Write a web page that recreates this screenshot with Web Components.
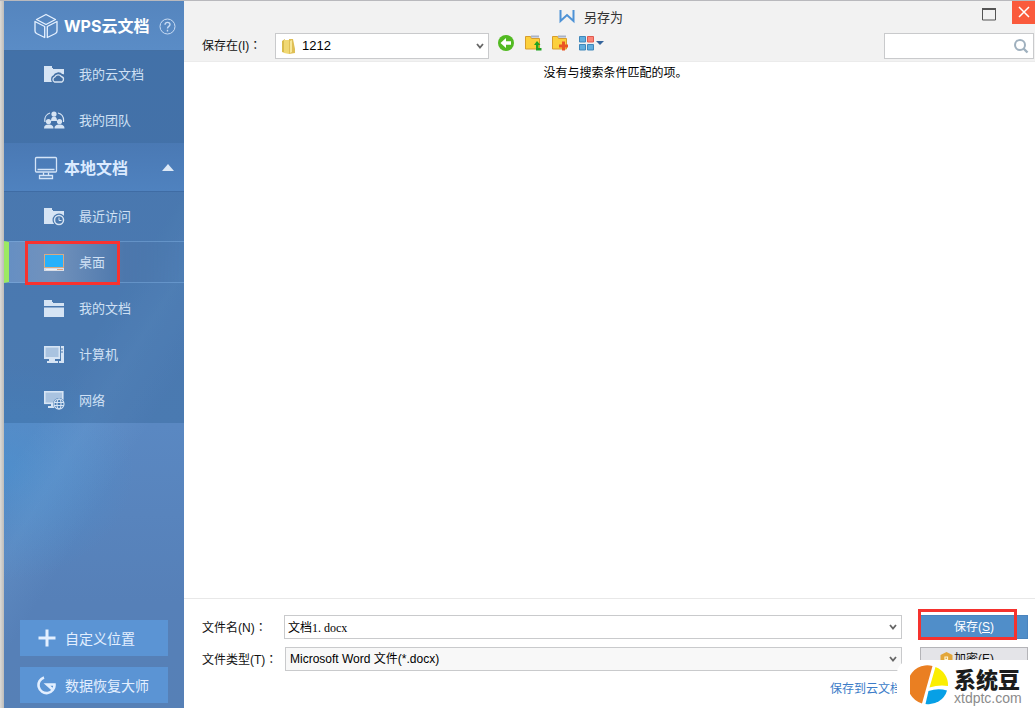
<!DOCTYPE html>
<html lang="zh-CN">
<head>
<meta charset="utf-8">
<title>另存为</title>
<style>
  body { margin: 0; font-family: "Liberation Sans", "Noto Sans CJK SC", sans-serif; font-size: 12px; color: #111; }
</style>
</head>
<body>
<save-dialog></save-dialog>

<template id="t-save-dialog">
  <style>
    :host { display: flex; position: relative; box-sizing: border-box; min-height: 100vh; padding-left: 4px; background: linear-gradient(90deg, #dcdad6, #bdbcba) left / 4px 100% no-repeat #fff; }
    :host::before { content: ""; position: absolute; top: 0; left: 0; right: 0; height: 1px; background: #b9b9bd; z-index: 1; }
    main { flex: 1; min-width: 0; display: flex; flex-direction: column; background: #fff; }
    .list { flex: 1; margin: 0; padding: 2px 0 0 12px; text-align: center; line-height: 18px; color: #000; }
    brand-mark { position: absolute; right: 0; bottom: 0; }
  </style>
  <side-bar></side-bar>
  <main>
    <dialog-header></dialog-header>
    <p class="list">没有与搜索条件匹配的项。</p>
    <dialog-footer></dialog-footer>
  </main>
  <brand-mark></brand-mark>
</template>

<template id="t-side-bar">
  <style>
    :host { display: flex; flex-direction: column; flex: none; width: 180px;
      background:
        linear-gradient(122deg, transparent 48%, rgba(120,170,220,.2) 56%, transparent 66%),
        radial-gradient(ellipse 130px 110px at 0 470px, rgba(70,150,215,.5), transparent),
        linear-gradient(#5784bd, #5a88c2 60%, #5680b8 85%, #5680b6); }
    nav { display: block; }
    .foot { margin-top: auto; display: flex; flex-direction: column; gap: 11px; padding: 0 16px 5px; }
  </style>
  <nav>
    <nav-section heading="WPS云文档" kind="cloud">
      <svg slot="icon" width="24" height="26" viewBox="0 0 24 26" fill="none" stroke="#e6f1ff" stroke-width="1.3" stroke-linejoin="round"><path d="M12 1.500 21.500 6.500 12 11.500 2.500 6.500ZM1 8.500 10.700 13.500V24.500L2.500 20.500Q1 19.500 1 18ZM23 8.500 13.300 13.500V24.500L21.500 20.500Q23 19.500 23 18Z"/></svg>
      <nav-item label="我的云文档"><svg slot="icon" width="21" height="20" viewBox="0 0 21 20"><path d="M0 2h8v2h12v14H0z" fill="#d6e4f4"/><path d="M9 4.500h11" stroke="#4470a4"/><path d="M10.500 18a3 3 0 0 1 0-5.600 4 4 0 0 1 7-.8 3 3 0 0 1 2 5.800z" fill="#d6e4f4" stroke="#4470a4" stroke-width="3"/><path d="M10.500 18a2.700 2.700 0 0 1 .3-5 3.800 3.800 0 0 1 6.500-.5 3 3 0 0 1 .7 5.500z" fill="#4470a4" stroke="#d6e4f4" stroke-width="1.300"/></svg></nav-item>
      <nav-item label="我的团队"><svg slot="icon" width="21" height="20" viewBox="0 0 21 20" fill="#d6e4f4"><circle cx="10" cy="4" r="2.600"/><path d="M7 11c0-3 1-4.500 3-4.500s3 1.500 3 4.500z"/><circle cx="4.500" cy="11.500" r="2.600"/><circle cx="15.500" cy="11.500" r="2.600"/><path d="M0 18.500c0-3 1.500-4 4.500-4s5 1 5 4zM10.500 18.500c0-3 2-4 5-4s5 1 5 4z"/><path d="M1 12C0 7 3 4 6 3M14 3c4 1 6 4 5.500 9" fill="none" stroke="#d6e4f4" stroke-width="1.200"/></svg></nav-item>
    </nav-section>
    <nav-section heading="本地文档" kind="local">
      <svg slot="icon" width="24" height="24" viewBox="0 0 24 24" fill="none" stroke="#d5e5f8" stroke-width="1.300"><rect x="1.500" y="1.500" width="21" height="14.500" rx="1"/><path d="M3.500 13.500h17M9.500 16.500v3M14.500 16.500v3M5.500 22.500v-3h13v3z"/></svg>
      <nav-item label="最近访问"><svg slot="icon" width="21" height="20" viewBox="0 0 21 20"><path d="M0 2h8v2h12v14H0z" fill="#d6e4f4"/><path d="M9 4.500h11" stroke="#4a78ae"/><circle cx="15" cy="14" r="6.500" fill="#4a78ae"/><circle cx="15" cy="14" r="4.500" fill="none" stroke="#d6e4f4" stroke-width="1.500"/><path d="M15 11.500V14.500h2.500" fill="none" stroke="#d6e4f4"/></svg></nav-item>
      <nav-item label="桌面" selected><svg slot="icon" width="21" height="20" viewBox="0 0 21 20"><rect x="0" y="2" width="20" height="17" fill="#d9dde6"/><rect x=".5" y="2.500" width="19" height="13" fill="#27b1fb" stroke="#d9a982"/><path d="M2 17.500h11" stroke="#eef0f5"/><path d="M13 17.500h6" stroke="#e0a37a"/></svg></nav-item>
      <nav-item label="我的文档"><svg slot="icon" width="21" height="20" viewBox="0 0 21 20" fill="#d6e4f4"><path d="M0 2h8v2h12v4H0zM0 9.500h20V19H0z"/><path d="M9 4.500h11" stroke="#4a78ae"/></svg></nav-item>
      <nav-item label="计算机"><svg slot="icon" width="21" height="20" viewBox="0 0 21 20"><rect x=".8" y="2.800" width="14.500" height="11" fill="#a9c3e0" stroke="#d6e4f4" stroke-width="1.600"/><path d="M5 14h6v3h3v2H3v-2h2zM17 2h3v17h-5v-2h2zM0 13h16v2H0z" fill="#d6e4f4"/><path d="M17 5h2M17 8h2" stroke="#4a78ae"/></svg></nav-item>
      <nav-item label="网络"><svg slot="icon" width="21" height="20" viewBox="0 0 21 20"><rect x=".8" y="1.800" width="18" height="11.500" fill="#a9c3e0" stroke="#d6e4f4" stroke-width="1.600"/><path d="M7 14h5v4H4v-2h3z" fill="#d6e4f4"/><circle cx="15" cy="14" r="6" fill="#4a7db4"/><g fill="none" stroke="#d6e4f4" stroke-width="1.100"><circle cx="15" cy="14" r="5"/><ellipse cx="15" cy="14" rx="2" ry="5"/><path d="M10 12.500h10M10 15.500h10"/></g></svg></nav-item>
    </nav-section>
  </nav>
  <div class="foot">
    <side-button label="自定义位置"><svg slot="icon" width="20" height="20" viewBox="0 0 20 20"><path d="M10 1.500v17M1.500 10h17" stroke="#e3efff" stroke-width="3"/></svg></side-button>
    <side-button label="数据恢复大师"><svg slot="icon" width="20" height="20" viewBox="0 0 20 20"><path d="M7 2.500A8 8 0 1 0 17.500 9.500H10L15 14" fill="none" stroke="#e3efff" stroke-width="2.600"/></svg></side-button>
  </div>
</template>

<template id="t-nav-section">
  <style>
    :host { display: block; }
    header { display: flex; align-items: center; box-sizing: border-box; height: 51px; padding: 2px 8px 0 30px; background: linear-gradient(#5585be, #5a8cc6); border-bottom: 1px solid #4470a4; }
    :host([kind="local"]) header { height: 49px; background: linear-gradient(#4a79b4, #4f82bf); border-bottom-color: #3f6ca4; }
    button { border: 0; padding: 0; background: none; color: inherit; font: inherit; display: flex; align-items: center; }
    .title { flex: 1; gap: 6px; font: bold 16px/24px Inter, "Noto Sans CJK SC", sans-serif; color: #fff; white-space: nowrap; }
    :host([kind="local"]) .title { color: #dcebff; }
    .help, :host([kind="local"]) .fold { display: flex; }
    .fold, :host([kind="local"]) .help { display: none; }
    .items { padding-top: 1px; background: rgba(40,90,140,.3); }
    :host([kind="cloud"]) .items { padding: 0; background: rgba(20,70,120,.3); }
  </style>
  <header>
    <button class="title" type="button"><slot name="icon"></slot><span></span></button>
    <button class="help" type="button" aria-label="帮助"><svg width="17" height="17" viewBox="0 0 17 17" fill="none" stroke="#c9dcf4"><circle cx="8.500" cy="8.500" r="7.500"/><path d="M6 6.800C6 3.500 11 3.700 11 6.600 11 8.500 8.500 8.300 8.500 10.500M8.500 11.800v1.600" stroke-width="1.400"/></svg></button>
    <button class="fold" type="button" aria-label="收起"><svg width="16" height="8" viewBox="0 0 16 8"><path d="M8 0 14 7H2z" fill="#dce8f6"/></svg></button>
  </header>
  <div class="items"><slot></slot></div>
</template>

<template id="t-nav-item">
  <style>
    :host { display: flex; align-items: center; position: relative; height: 46px; }
    a { flex: 1; display: flex; align-items: center; box-sizing: border-box; height: 42px; gap: 14px; padding-left: 40px; font: 13px/20px "Noto Sans CJK SC", sans-serif; color: #cfe0f4; text-decoration: none; }
    :host([selected]) a { padding-left: 35px; border: 1px solid rgba(130,180,230,.45); border-left: 5px solid #9cea62; border-right: 0; background: linear-gradient(90deg, #668fc3, #7292bc 25%, #4c77ac 66%, rgba(76,119,172,0)); }
    i { display: none; }
    :host([selected]) i { display: block; position: absolute; left: 21px; top: 2px; width: 89px; height: 38px; border: 3px solid #f8322f; }
  </style>
  <a href="#"><slot name="icon"></slot><span></span></a><i></i>
</template>

<template id="t-side-button">
  <style>
    :host { display: block; }
    button { display: flex; align-items: center; gap: 8px; box-sizing: border-box; width: 100%; height: 36px; padding: 0 0 0 17px; border: 0; background: #5b94d4; color: #e3efff; font: 14px/20px "Noto Sans CJK SC", sans-serif; }
  </style>
  <button type="button"><slot name="icon"></slot><span></span></button>
</template>

<template id="t-dialog-header">
  <style>
    :host { display: block; box-sizing: border-box; padding-bottom: 2px; background: #f2f2f2; border-bottom: 1px solid #ebebeb; }
    .bar { display: flex; height: 33px; }
    h1 { flex: 1; display: flex; justify-content: center; align-items: center; gap: 9px; margin: 0; padding-left: 16px; font: 13px/20px "Noto Sans CJK SC", sans-serif; color: #333; }
    button { display: flex; border: 0; padding: 0; background: none; }
    .max { width: 30px; height: 24px; padding-top: 8px; }
    .close { width: 23px; height: 24px; background: #fa5a3c; align-items: center; justify-content: center; }
    .tools { display: flex; align-items: center; height: 26px; padding: 0 1px 0 18px; }
    label { width: 73px; height: 24px; line-height: 22px; white-space: nowrap; }
    label span { font-family: "Noto Sans CJK TC", sans-serif; }
    .combo { width: 214px; }
    .acts { display: flex; gap: 9px; padding: 0 8px 6px; flex: 1; }
    form { display: flex; align-items: center; box-sizing: border-box; width: 150px; height: 26px; border: 1px solid #c9cacc; background: #fff; padding-right: 4px; }
    input { flex: 1; min-width: 0; border: 0; outline: 0; background: none; }
    select { flex: 1; min-width: 0; height: 24px; border: 0; padding: 0 20px 0 6px; appearance: none; font: 13px/20px "Liberation Sans", sans-serif; color: #000; background: url("data:image/svg+xml,%3Csvg xmlns='http://www.w3.org/2000/svg' width='8' height='6'%3E%3Cpath d='M1 1l3 3.500 3-3.500' fill='none' stroke='%23666' stroke-width='1.800'/%3E%3C/svg%3E") right 4px center no-repeat; }
    .combo { display: flex; align-items: center; box-sizing: border-box; height: 26px; padding-left: 5px; border: 1px solid #c9cacc; background: #fff; }
  </style>
  <div class="bar">
    <h1><svg width="16" height="14" viewBox="0 0 16 14"><path d="M1.500 0v11L8 5l6.500 6V0" fill="none" stroke="#4d92d6" stroke-width="2"/></svg>另存为</h1>
    <button class="max" type="button" aria-label="最大化"><svg width="14" height="13" viewBox="0 0 14 13"><path d="M.5 1.500h13v10.500H.5z" fill="none" stroke="#555"/><path d="M0 1h14" stroke="#555" stroke-width="2"/></svg></button>
    <button class="close" type="button" aria-label="关闭"><svg width="12" height="12" viewBox="0 0 12 12"><path d="M1 1l10 10M11 1 1 11" stroke="#fff" stroke-width="1.500"/></svg></button>
  </div>
  <div class="tools">
    <label for="where">保存在(I)<span lang="zh-TW">：</span></label>
    <div class="combo">
      <svg width="15" height="17" viewBox="0 0 15 17"><path d="M1 3l3-2v14l-3-1z" fill="#d9bb4c"/><path d="M3 2h5v14l-5-1z" fill="#f0d873"/><path d="M8 1h4l2 10v4l-6 1z" fill="#dfbf55"/><path d="M9 3l2-1v12l-2 1z" fill="#f7e79a"/></svg>
      <select id="where"><option>1212</option></select>
    </div>
    <div class="acts">
      <button type="button" aria-label="后退"><svg width="18" height="18" viewBox="0 0 18 18"><circle cx="9" cy="9" r="8" fill="#52ba22"/><path d="M3.500 9 9 4v3.200h5v3.600H9V14z" fill="#fff"/></svg></button>
      <button type="button" aria-label="上一级"><svg width="18" height="18" viewBox="0 0 18 18"><path d="M1.500 2.500h5l1 2h8v10.500h-14z" fill="#fcd03c" stroke="#d79d2c"/><path d="M7 2.500h8" stroke="#a9b2c6" stroke-width="2"/><path d="M13 7l3.500 4h-2v3h3v2.500H12V11h-2z" fill="#20a320"/></svg></button>
      <button type="button" aria-label="新建文件夹"><svg width="18" height="18" viewBox="0 0 18 18"><path d="M1.500 2.500h5l1 2h8v10.500h-14z" fill="#fcd03c" stroke="#d79d2c"/><path d="M7 2.500h8" stroke="#a9b2c6" stroke-width="2"/><path d="M12.500 7.500v9M8 12h9" stroke="#ea5523" stroke-width="3"/></svg></button>
      <button type="button" aria-label="视图"><svg width="26" height="18" viewBox="0 0 26 18"><path d="M1.500 2.500h6v5.500h-6zM1.500 10.500h6v5.500h-6zM9.500 10.500h6v5.500h-6z" fill="#62aede" stroke="#4087ba"/><path d="M9.500 2.500h6v5.500h-6z" fill="#fb8577" stroke="#e0594e"/><path d="M18 7h8l-4 4z" fill="#35659c"/></svg></button>
    </div>
    <form role="search">
      <input type="search" aria-label="搜索">
      <svg width="16" height="16" viewBox="0 0 16 16" fill="none" stroke="#9fb0be" stroke-width="2"><circle cx="7" cy="7" r="5"/><path d="M10.500 10.500l4 4" stroke-width="2.400"/></svg>
    </form>
  </div>
</template>

<template id="t-dialog-footer">
  <style>
    :host { display: block; border-top: 1px solid #e8e8e8; padding: 16px 7px 8px 18px; }
    form { display: grid; grid-template-columns: 82px minmax(0, 1fr) 108px; grid-template-rows: 24px 24px 21px; row-gap: 8px; }
    .field { display: flex; align-items: center; box-sizing: border-box; height: 24px; border: 1px solid #c9cacc; margin-right: 18px; background: #fff; }
    .type { background: #f8f8f8; margin-left: 1px; }
    label { height: 24px; line-height: 24px; white-space: nowrap; }
    label span { font-family: "Noto Sans CJK TC", sans-serif; }
    input, select { flex: 1; min-width: 0; height: 22px; box-sizing: border-box; border: 0; outline: 0; padding: 0 4px; background: none; color: #000; appearance: none; font: 12px/18px "Liberation Sans", "Noto Sans CJK SC", sans-serif; }
    input { padding: 0 3px; font-family: "Liberation Serif", "Noto Sans CJK SC", serif; }
    .field svg { margin-right: 4px; pointer-events: none; }
    .save { position: relative; }
    .save i { position: absolute; left: -2px; top: -6px; width: 93px; height: 25px; border: 3px solid #f5322e; }
    button { display: flex; align-items: center; justify-content: center; gap: 1px; box-sizing: border-box; width: 100%; height: 24px; padding: 0; border: 1px solid #4a84be; background: #508ec9; color: #fff; font: 12px/18px "Liberation Sans", "Noto Sans CJK SC", sans-serif; }
    .lock { background: #e4e4e8; border-color: #b4b4b8; color: #111; justify-content: flex-start; padding-left: 19px; }
    a { grid-column: 2; justify-self: end; margin-right: 18px; line-height: 21px; color: #3c7cc8; text-decoration: none; }
  </style>
  <form>
    <label for="name">文件名(N)<span lang="zh-TW">：</span></label>
    <div class="field"><input id="name" type="text" value="文档1. docx"><svg width="8" height="6" viewBox="0 0 8 6"><path d="M1 1l3 3.500L7 1" fill="none" stroke="#666" stroke-width="1.800"/></svg></div>
    <div class="save"><button type="button"><span>保存(<u>S</u>)</span></button><i></i></div>
    <label for="type">文件类型(T)<span lang="zh-TW">：</span></label>
    <div class="field type"><select id="type"><option>Microsoft Word 文件(*.docx)</option></select><svg width="8" height="6" viewBox="0 0 8 6"><path d="M1 1l3 3.500L7 1" fill="none" stroke="#666" stroke-width="1.800"/></svg></div>
    <button class="lock" type="button"><svg width="13" height="14" viewBox="0 0 13 14"><path d="M6.500 0 12.500 3v6q-1 3.500-6 5-5-1.500-6-5V3z" fill="#e3a638"/><path d="M5 10V5h2.500v2.500H5" fill="none" stroke="#fff3cf" stroke-width="1.200"/></svg><span>加密(E)</span></button>
    <a href="#">保存到云文档</a>
  </form>
</template>

<template id="t-brand-mark">
  <style>
    :host { display: flex; align-items: center; gap: 5px; box-sizing: border-box; width: 138px; height: 48px; padding: 2px 0 0 13px; border-radius: 14px 0 0 0; background: #fff; }
    div { display: flex; flex-direction: column; }
    b { font: 900 22px/26px "Noto Sans CJK SC", sans-serif; color: #1c1c1c; }
    span { font: 14px/14px "Liberation Sans", sans-serif; color: #8b8b8b; }
  </style>
  <svg width="39" height="40" viewBox="0 0 39 40"><path d="M22.500 1 12 38.500A19 19 0 0 1 22.500 1z" fill="#ea7f22"/><path d="M25.500 2A19 19 0 0 1 38 21Q29 19.500 19.500 22.500z" fill="#fbee00"/><path d="M18.500 26Q28 23 37 25.500A19 19 0 0 1 15.500 39z" fill="#07a0e6"/></svg>
  <div><b>系统豆</b><span>xtdptc.com</span></div>
</template>

<script>
  class TemplateElement extends HTMLElement {
    constructor() {
      super();
      this.attachShadow({ mode: "open" })
        .append(document.getElementById("t-" + this.localName).content.cloneNode(true));
    }
  }
  class LabelledElement extends TemplateElement {
    connectedCallback() {
      this.shadowRoot.querySelector("span").textContent =
        this.getAttribute("label") || this.getAttribute("heading");
    }
  }
  for (const name of ["nav-item", "nav-section", "side-button"])
    customElements.define(name, class extends LabelledElement {});
  for (const name of ["brand-mark", "dialog-header", "dialog-footer", "side-bar", "save-dialog"])
    customElements.define(name, class extends TemplateElement {});
</script>
</body>
</html>
